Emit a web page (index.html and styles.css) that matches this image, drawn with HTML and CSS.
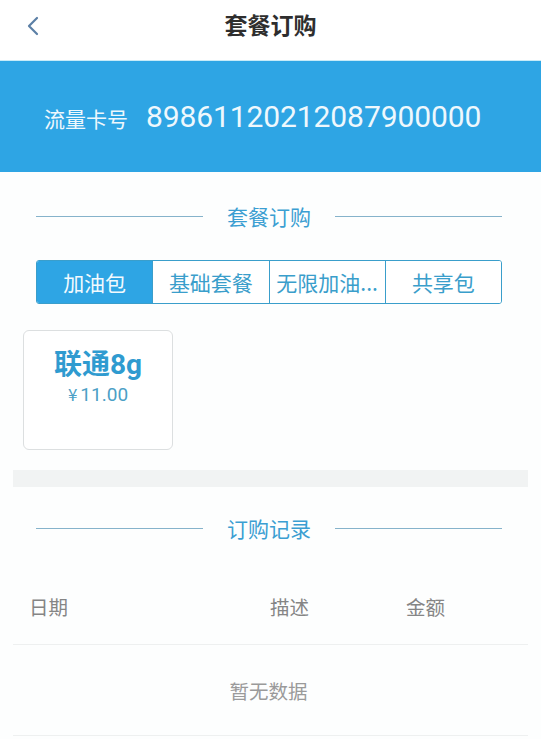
FILE: index.html
```html
<!DOCTYPE html>
<html lang="zh-CN">
<head>
<meta charset="utf-8">
<title>套餐订购</title>
<link rel="stylesheet" href="styles.css">
</head>
<body>
<div class="page">
  <header class="topbar">
    <span class="back">
      <svg width="14" height="22" viewBox="0 0 14 22"><path d="M11 3 L3 11 L11 19" fill="none" stroke="#5b7fa6" stroke-width="2.2" stroke-linecap="round" stroke-linejoin="round"/></svg>
    </span>
    <h1 class="title">套餐订购</h1>
  </header>
  <section class="banner">
    <span class="banner-label">流量卡号</span>
    <span class="banner-num">89861120212087900000</span>
  </section>

  <div class="section-title first">
    <span class="line"></span><span class="st-text">套餐订购</span><span class="line"></span>
  </div>

  <div class="tabs">
    <div class="tab active">加油包</div>
    <div class="tab">基础套餐</div>
    <div class="tab">无限加油...</div>
    <div class="tab">共享包</div>
  </div>

  <div class="cards">
    <div class="card">
      <div class="card-name">联通8g</div>
      <div class="card-price"><span class="yen">¥</span>11.00</div>
    </div>
  </div>

  <div class="band"></div>

  <div class="section-title second">
    <span class="line"></span><span class="st-text">订购记录</span><span class="line"></span>
  </div>

  <div class="table">
    <div class="thead">
      <span class="c-date">日期</span>
      <span class="c-desc">描述</span>
      <span class="c-amt">金额</span>
    </div>
    <div class="empty">暂无数据</div>
  </div>
</div>
</body>
</html>
```
FILE: styles.css
```css
* { box-sizing: border-box; }
html, body { margin: 0; padding: 0; }
body {
  background: #fdfefe;
  font-family: "Noto Sans CJK SC", "Noto Sans", Roboto, sans-serif;
  width: 541px;
  overflow: hidden;
}
.page { width: 541px; }

.topbar {
  height: 61px;
  display: flex;
  align-items: center;
  justify-content: center;
  position: relative;
  background: #ffffff;
  border-bottom: 1px solid #c8ebf8;
}
.back {
  position: absolute;
  left: 26px;
  top: 15px;
  display: flex;
}
.title {
  margin: 0;
  font-size: 23px;
  font-weight: 700;
  color: #2e2e2e;
  line-height: 30px;
  margin-top: -12px;
}

.banner {
  height: 111px;
  background: #2ea5e4;
  display: flex;
  align-items: center;
  padding-left: 44px;
  color: #eef8fd;
}
.banner-label {
  font-size: 21px;
  margin-right: 18px;
  margin-top: 2px;
}
.banner-num {
  font-family: Roboto, "Noto Sans", sans-serif;
  font-size: 30px;
  letter-spacing: -0.1px;
}

.section-title {
  display: flex;
  align-items: center;
  margin: 0 39px 0 36px;
  height: 30px;
}
.section-title.first { margin-top: 29px; }
.section-title.second { margin-top: 26px; }
.line {
  flex: 1;
  height: 1px;
  background: #86b3cb;
}
.st-text {
  font-size: 21px;
  color: #3b9ed2;
  padding: 0 24px;
  line-height: 30px;
}

.tabs {
  display: flex;
  margin: 29px 39px 0 36px;
  height: 44px;
  border: 1.5px solid #3a9ecb;
  border-radius: 3px;
  overflow: hidden;
}
.tab {
  flex: 1;
  display: flex;
  align-items: center;
  justify-content: center;
  font-size: 21px;
  color: #3a9ecb;
  border-left: 1.5px solid #3a9ecb;
  background: #fff;
  white-space: nowrap;
}
.tab:first-child { border-left: none; }
.tab.active {
  background: #2ea5e4;
  color: #f2fafe;
}

.cards {
  display: flex;
  padding-left: 23px;
  margin-top: 26px;
}
.card {
  width: 150px;
  height: 120px;
  border: 1.5px solid #dcdfe0;
  border-radius: 6px;
  background: #fff;
  display: flex;
  flex-direction: column;
  align-items: center;
  padding-top: 17px;
}
.card-name {
  font-family: Roboto, "Noto Sans CJK SC", sans-serif;
  font-size: 28px;
  font-weight: 700;
  color: #2f9bd0;
  line-height: 34px;
}
.card-price {
  font-family: Roboto, "Noto Sans", sans-serif;
  font-size: 19px;
  color: #4c9fc6;
  line-height: 22px;
  margin-top: 1px;
}
.yen {
  font-family: "Noto Sans CJK SC", sans-serif;
  font-size: 17px;
  margin-right: 3px;
}

.band {
  margin: 20px 13px 0 13px;
  height: 17px;
  background: #f1f3f3;
}

.table {
  margin: 0 13px;
}
.thead {
  height: 102px;
  display: flex;
  align-items: center;
  padding-top: 25px;
  border-bottom: 1.5px solid #eef0f0;
  font-size: 19.5px;
  color: #858585;
}
.c-date { margin-left: 16px; width: 241px; }
.c-desc { width: 136px; }
.empty {
  height: 91px;
  display: flex;
  align-items: center;
  justify-content: center;
  font-size: 19.5px;
  color: #9a9a9a;
  border-bottom: 1.5px solid #eef0f0;
  padding-right: 4px;
}
```
